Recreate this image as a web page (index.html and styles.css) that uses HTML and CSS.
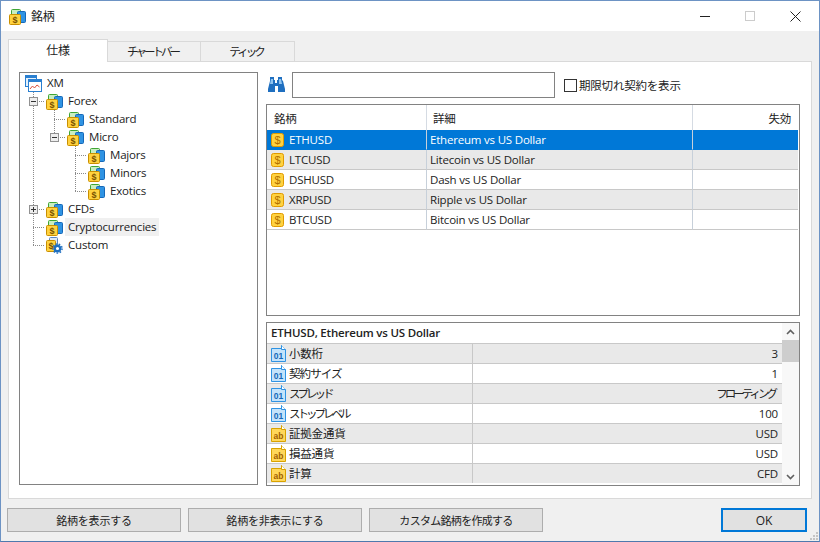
FILE: index.html
```html
<!DOCTYPE html>
<html lang="ja">
<head>
    <meta charset="UTF-8">
    <title>銘柄</title>
    <link rel="stylesheet" href="styles.css">
</head>
<body>
    <svg class="sprite">
        <symbol id="folder" viewBox="0 0 17 17">
            <rect x="2.500" y="1.500" width="9" height="7" rx="1" fill="#c8eec0" stroke="#3fa535"/>
            <rect x="8.500" y="3.500" width="8" height="11" rx="1" fill="#2f93e3" stroke="#1668b8"/>
            <rect x="0.500" y="6.500" width="11" height="10" rx="1" fill="#ffd23f" stroke="#c98f00"/>
        </symbol>
        <symbol id="custom" viewBox="0 0 17 17">
            <rect x="3.500" y="0.500" width="8" height="8" rx="1" fill="#dfe9f7" stroke="#5a86c0"/>
            <rect x="0.500" y="3.500" width="9" height="11" rx="1" fill="#ffd23f" stroke="#c98f00"/>
            <circle cx="11.500" cy="11.500" r="2.800" fill="#fff" stroke="#1f6fc0" stroke-width="2.400"/>
            <circle cx="11.500" cy="11.500" r="4.600" fill="none" stroke="#1f6fc0" stroke-width="1.400" stroke-dasharray="1.600 1.600"/>
        </symbol>
        <symbol id="xm" viewBox="0 0 17 17">
            <rect x="0.500" y="0.500" width="11" height="11" fill="#e4f1fc" stroke="#2a7fd0"/>
            <rect x="0" y="0" width="12" height="3" fill="#2a7fd0"/>
            <rect x="3.500" y="4.500" width="13" height="12" fill="#fff" stroke="#2a7fd0"/>
            <rect x="3" y="4" width="14" height="3" fill="#2a7fd0"/>
            <path d="M5 14l2.500-3 2 2 2.500-3 2.500 2" fill="none" stroke="#d8503c"/>
        </symbol>
        <symbol id="coin" viewBox="0 0 13 14">
            <rect x="0.500" y="0.500" width="12" height="13" rx="2" fill="#ffd23f" stroke="#e09a00"/>
        </symbol>
        <symbol id="num" viewBox="0 0 16 17">
            <path d="M0.500 3.500h10v-3l4 4v12h-14z" fill="#c4e3fa" stroke="#2f93e3"/>
            <path d="M10.500 0.500v4h4" fill="#fff" stroke="#2f93e3"/>
        </symbol>
        <symbol id="str" viewBox="0 0 16 17">
            <path d="M0.500 3.500h10v-3l4 4v12h-14z" fill="#ffd75a" stroke="#d9a200"/>
            <path d="M10.500 0.500v4h4" fill="#fff" stroke="#d9a200"/>
        </symbol>
        <symbol id="chev-up" viewBox="0 0 9 6">
            <path d="M1 5l3.500-3.500L8 5" fill="none" stroke="#606060" stroke-width="1.600"/>
        </symbol>
        <symbol id="chev-down" viewBox="0 0 9 6">
            <path d="M1 1l3.500 3.500L8 1" fill="none" stroke="#606060" stroke-width="1.600"/>
        </symbol>
    </svg>

    <div class="window">
        <div class="titlebar">
            <svg class="title-icon" viewBox="0 0 17 17"><use href="#folder"/><text x="6" y="15" class="dollar">$</text></svg>
            <span class="title-text">銘柄</span>
            <div class="controls">
                <span class="ctl-min"></span>
                <span class="ctl-max"></span>
                <svg class="ctl-close" viewBox="0 0 11 11"><path d="M0.500 0.500l10 10M10.500 0.500l-10 10" stroke="#222" fill="none"/></svg>
            </div>
        </div>

        <div class="tabs">
            <div class="tab active">仕様</div>
            <div class="tab tab-bar"><span class="kana">チャートバー</span></div>
            <div class="tab tab-tick"><span class="kana">ティック</span></div>
        </div>

        <div class="panel">
            <div class="tree">
                <div class="node"><svg class="node-icon"><use href="#xm"/></svg><span class="node-text">XM</span></div>
                <div class="node">
                    <span class="cell tee"><svg class="exp" viewBox="0 0 9 9"><rect x="0.500" y="0.500" width="8" height="8" fill="#eee" stroke="#919191"/><path d="M2 4.500h5" stroke="#333"/></svg></span>
                    <svg class="node-icon"><use href="#folder"/><text x="6" y="15" class="dollar">$</text></svg><span class="node-text">Forex</span>
                </div>
                <div class="node">
                    <span class="cell vert"></span><span class="cell tee"></span>
                    <svg class="node-icon"><use href="#folder"/><text x="6" y="15" class="dollar">$</text></svg><span class="node-text">Standard</span>
                </div>
                <div class="node">
                    <span class="cell vert"></span>
                    <span class="cell elbow"><svg class="exp" viewBox="0 0 9 9"><rect x="0.500" y="0.500" width="8" height="8" fill="#eee" stroke="#919191"/><path d="M2 4.500h5" stroke="#333"/></svg></span>
                    <svg class="node-icon"><use href="#folder"/><text x="6" y="15" class="dollar">$</text></svg><span class="node-text">Micro</span>
                </div>
                <div class="node">
                    <span class="cell vert"></span><span class="cell"></span><span class="cell tee"></span>
                    <svg class="node-icon"><use href="#folder"/><text x="6" y="15" class="dollar">$</text></svg><span class="node-text">Majors</span>
                </div>
                <div class="node">
                    <span class="cell vert"></span><span class="cell"></span><span class="cell tee"></span>
                    <svg class="node-icon"><use href="#folder"/><text x="6" y="15" class="dollar">$</text></svg><span class="node-text">Minors</span>
                </div>
                <div class="node">
                    <span class="cell vert"></span><span class="cell"></span><span class="cell elbow"></span>
                    <svg class="node-icon"><use href="#folder"/><text x="6" y="15" class="dollar">$</text></svg><span class="node-text">Exotics</span>
                </div>
                <div class="node">
                    <span class="cell tee"><svg class="exp" viewBox="0 0 9 9"><rect x="0.500" y="0.500" width="8" height="8" fill="#eee" stroke="#919191"/><path d="M2 4.500h5M4.500 2v5" stroke="#333"/></svg></span>
                    <svg class="node-icon"><use href="#folder"/><text x="6" y="15" class="dollar">$</text></svg><span class="node-text">CFDs</span>
                </div>
                <div class="node">
                    <span class="cell tee"></span>
                    <svg class="node-icon"><use href="#folder"/><text x="6" y="15" class="dollar">$</text></svg><span class="node-text hilite">Cryptocurrencies</span>
                </div>
                <div class="node">
                    <span class="cell elbow"></span>
                    <svg class="node-icon"><use href="#custom"/><text x="5" y="12" class="dollar">$</text></svg><span class="node-text">Custom</span>
                </div>
            </div>

            <div class="right">
                <div class="search">
                    <svg class="binoculars" viewBox="0 0 18 16">
                        <path d="M3 0h4v3h1v3h2V3h1V0h4v3l1 1 2 8v3h-7V9H8v6H1v-3l2-8z" fill="#1f6fc0"/>
                        <path d="M4 2h2v5H3zM12 2h2l1 5h-3z" fill="#8fc4f0"/>
                    </svg>
                    <input class="search-box" type="text">
                    <span class="check"></span>
                    <span class="check-label">期限切れ契約を表示</span>
                </div>

                <div class="list">
                    <table class="symbols">
                        <tr class="head"><th class="c1">銘柄</th><th class="c2">詳細</th><th class="c3">失効</th></tr>
                        <tr class="sel"><td><svg class="coin"><use href="#coin"/><text x="6.500" y="11" class="dollar dollar-big">$</text></svg>ETHUSD</td><td>Ethereum vs US Dollar</td><td></td></tr>
                        <tr class="alt"><td><svg class="coin"><use href="#coin"/><text x="6.500" y="11" class="dollar dollar-big">$</text></svg>LTCUSD</td><td>Litecoin vs US Dollar</td><td></td></tr>
                        <tr><td><svg class="coin"><use href="#coin"/><text x="6.500" y="11" class="dollar dollar-big">$</text></svg>DSHUSD</td><td>Dash vs US Dollar</td><td></td></tr>
                        <tr class="alt"><td><svg class="coin"><use href="#coin"/><text x="6.500" y="11" class="dollar dollar-big">$</text></svg>XRPUSD</td><td>Ripple vs US Dollar</td><td></td></tr>
                        <tr><td><svg class="coin"><use href="#coin"/><text x="6.500" y="11" class="dollar dollar-big">$</text></svg>BTCUSD</td><td>Bitcoin vs US Dollar</td><td></td></tr>
                    </table>
                </div>

                <div class="detail">
                    <div class="detail-main">
                        <div class="detail-title">ETHUSD, Ethereum vs US Dollar</div>
                        <table class="props">
                            <tr class="alt"><td class="p1"><svg class="prop-icon"><use href="#num"/><text x="7.500" y="13.500" class="code code-num">01</text></svg>小数桁</td><td class="p2">3</td></tr>
                            <tr><td class="p1"><svg class="prop-icon"><use href="#num"/><text x="7.500" y="13.500" class="code code-num">01</text></svg><span class="mixed">契約サイズ</span></td><td class="p2">1</td></tr>
                            <tr class="alt"><td class="p1"><svg class="prop-icon"><use href="#num"/><text x="7.500" y="13.500" class="code code-num">01</text></svg><span class="kana">スプレッド</span></td><td class="p2"><span class="kana">フローティング</span></td></tr>
                            <tr><td class="p1"><svg class="prop-icon"><use href="#num"/><text x="7.500" y="13.500" class="code code-num">01</text></svg><span class="kana">ストップレベル</span></td><td class="p2">100</td></tr>
                            <tr class="alt"><td class="p1"><svg class="prop-icon"><use href="#str"/><text x="7.500" y="13.500" class="code code-str">ab</text></svg>証拠金通貨</td><td class="p2">USD</td></tr>
                            <tr><td class="p1"><svg class="prop-icon"><use href="#str"/><text x="7.500" y="13.500" class="code code-str">ab</text></svg>損益通貨</td><td class="p2">USD</td></tr>
                            <tr class="alt"><td class="p1"><svg class="prop-icon"><use href="#str"/><text x="7.500" y="13.500" class="code code-str">ab</text></svg>計算</td><td class="p2">CFD</td></tr>
                        </table>
                    </div>
                    <div class="scrollbar">
                        <div class="arrow"><svg class="chev"><use href="#chev-up"/></svg></div>
                        <div class="thumb"></div>
                        <div class="track"></div>
                        <div class="arrow"><svg class="chev"><use href="#chev-down"/></svg></div>
                    </div>
                </div>
            </div>
        </div>

        <div class="footer">
            <button class="btn">銘柄を表示する</button>
            <button class="btn">銘柄を非表示にする</button>
            <button class="btn btn-long">カスタム銘柄を作成する</button>
            <button class="btn btn-ok">OK</button>
            <svg class="grip" viewBox="0 0 11 9">
                <path d="M8 0h2v2H8zM5 3h2v2H5zM8 3h2v2H8zM2 6h2v2H2zM5 6h2v2H5zM8 6h2v2H8z" fill="#c4c4c4"/>
            </svg>
        </div>
    </div>
</body>
</html>
```

FILE: styles.css
```css
* {
    box-sizing: border-box;
}
html, body {
    margin: 0;
    padding: 0;
}
body {
    width: 820px;
    height: 542px;
    overflow: hidden;
    font-family: "Open Sans", "Noto Sans CJK JP", sans-serif;
    font-size: 11.5px;
    letter-spacing: -0.2px;
    color: #222;
}
.sprite {
    display: block;
    width: 0;
    height: 0;
}
.kana {
    letter-spacing: -3px;
    margin-right: 3px;
}
.mixed {
    letter-spacing: -0.9px;
}
.dollar {
    font-family: "Liberation Sans", sans-serif;
    font-size: 9px;
    font-weight: bold;
    letter-spacing: 0;
    text-anchor: middle;
    fill: #7a5200;
}
.dollar-big {
    font-size: 11px;
    font-weight: normal;
    fill: #b06f00;
}
.code {
    font-family: "Liberation Sans", sans-serif;
    font-size: 8.500px;
    font-weight: bold;
    letter-spacing: 0;
    text-anchor: middle;
}
.code-num {
    fill: #1668b8;
}
.code-str {
    fill: #a06000;
}

.window {
    width: 820px;
    height: 542px;
    display: flex;
    flex-direction: column;
    background: #f0f0f0;
    border: 1px solid #6d93c4;
    border-bottom-color: #4f79ad;
}

.titlebar {
    height: 30px;
    flex: none;
    display: flex;
    align-items: center;
    background: #fff;
    padding-left: 8px;
}
.title-icon {
    width: 17px;
    height: 17px;
}
.title-text {
    margin-left: 5px;
    font-size: 12px;
}
.controls {
    margin-left: auto;
    display: flex;
    align-items: center;
    padding-right: 18px;
}
.ctl-min {
    width: 10px;
    height: 1px;
    background: #222;
}
.ctl-max {
    width: 10px;
    height: 10px;
    border: 1px solid #ccc;
    margin-left: 35px;
}
.ctl-close {
    width: 11px;
    height: 11px;
    margin-left: 35px;
}

.tabs {
    display: flex;
    align-items: flex-end;
    height: 23px;
    margin-top: 8px;
    padding-left: 7px;
    flex: none;
    position: relative;
    z-index: 1;
    margin-bottom: -1px;
}
.tab {
    height: 21px;
    width: 94px;
    background: #f0f0f0;
    border: 1px solid #d9d9d9;
    border-left: 0;
    text-align: center;
    line-height: 20px;
}
.tab-bar {
    width: 93px;
}
.active {
    width: 100px;
    height: 23px;
    background: #fff;
    border-left: 1px solid #d9d9d9;
    border-bottom: 0;
    font-size: 12px;
    line-height: 21px;
}

.panel {
    width: 804px;
    height: 438px;
    margin-left: 7px;
    flex: none;
    background: #fff;
    border: 1px solid #d9d9d9;
    padding: 10px;
    display: flex;
    gap: 8px;
}

.tree {
    width: 239px;
    height: 413px;
    flex: none;
    border: 1px solid #828282;
    padding: 1px 3px 0;
}
.node {
    display: flex;
    align-items: center;
    height: 18px;
}
.cell {
    width: 21px;
    height: 18px;
    flex: none;
    display: flex;
    align-items: center;
    justify-content: center;
    padding-right: 1px;
    background-repeat: no-repeat;
}
.vert {
    background-image: repeating-linear-gradient(to bottom, #8a8a8a 0 1px, transparent 1px 2px);
    background-size: 1px 18px;
    background-position: 10px 0;
}
.tee {
    background-image: repeating-linear-gradient(to bottom, #8a8a8a 0 1px, transparent 1px 2px),
        repeating-linear-gradient(to right, #8a8a8a 0 1px, transparent 1px 2px);
    background-size: 1px 18px, 11px 1px;
    background-position: 10px 0, 10px 9px;
}
.elbow {
    background-image: repeating-linear-gradient(to bottom, #8a8a8a 0 1px, transparent 1px 2px),
        repeating-linear-gradient(to right, #8a8a8a 0 1px, transparent 1px 2px);
    background-size: 1px 9px, 11px 1px;
    background-position: 10px 0, 10px 9px;
}
.exp {
    width: 9px;
    height: 9px;
}
.node-icon {
    width: 17px;
    height: 17px;
    margin-left: 2px;
    flex: none;
}
.node-text {
    margin-left: 2px;
    padding: 0 3px;
    line-height: 18px;
}
.hilite {
    background: #f0f0f0;
}

.right {
    width: 534px;
    flex: none;
    display: flex;
    flex-direction: column;
    gap: 6px;
}
.search {
    height: 26px;
    display: flex;
    align-items: center;
}
.binoculars {
    width: 18px;
    height: 16px;
    margin-left: 1px;
}
.search-box {
    width: 263px;
    height: 26px;
    margin: 0 0 0 7px;
    border: 1px solid #828282;
    background: #fff;
    outline: none;
}
.check {
    width: 13px;
    height: 13px;
    margin-left: 9px;
    border: 1px solid #333;
    background: #fff;
}
.check-label {
    margin-left: 2px;
}

.list {
    height: 212px;
    border: 1px solid #828282;
    padding-right: 1px;
}
table {
    border-collapse: separate;
    border-spacing: 0;
    table-layout: fixed;
    width: 100%;
}
.symbols th {
    height: 25px;
    font-weight: normal;
    text-align: left;
    padding: 0 0 0 7px;
    border-right: 1px solid #d5dbe3;
}
.symbols .c1 {
    width: 160px;
}
.symbols .c2 {
    width: 266px;
    padding-left: 6px;
}
.symbols .c3 {
    text-align: right;
    padding-right: 7px;
    border-right: 0;
}
.symbols td {
    height: 20px;
    padding: 0 0 1px 3px;
    border-bottom: 1px solid #c8c8c8;
    border-right: 1px solid #c7d0da;
    white-space: nowrap;
    vertical-align: middle;
}
.symbols td:last-child {
    border-right: 0;
}
.coin {
    width: 13px;
    height: 14px;
    margin: 0 5px 0 1px;
    vertical-align: -3px;
}
.alt td {
    background: #e9e9e9;
}
.sel td {
    background: #0078d7;
    color: #fff;
    border-bottom-color: #0078d7;
}

.detail {
    height: 164px;
    border: 1px solid #828282;
    display: flex;
}
.detail-main {
    flex: 1;
    min-width: 0;
    overflow: hidden;
}
.detail-title {
    height: 20px;
    line-height: 20px;
    font-weight: 600;
    padding-left: 4px;
}
.props td {
    height: 20px;
    padding: 0 0 1px;
    border-top: 1px solid #c8c8c8;
    white-space: nowrap;
    vertical-align: middle;
}
.props .p1 {
    width: 206px;
    padding-left: 4px;
    border-right: 1px solid #c8c8c8;
}
.props .p2 {
    text-align: right;
    padding-right: 4px;
}
.prop-icon {
    width: 16px;
    height: 17px;
    margin-right: 2px;
    vertical-align: -4px;
}
.scrollbar {
    width: 17px;
    flex: none;
    display: flex;
    flex-direction: column;
    background: #f8f8f8;
}
.arrow {
    height: 17px;
    flex: none;
    display: flex;
    align-items: center;
    justify-content: center;
}
.chev {
    width: 9px;
    height: 6px;
}
.thumb {
    height: 22px;
    background: #cdcdcd;
}
.track {
    flex: 1;
}

.footer {
    flex: 1;
    display: flex;
    gap: 7px;
    padding: 9px 0 0 6px;
    align-items: flex-start;
}
.btn {
    width: 174px;
    height: 24px;
    padding: 0;
    background: #e1e1e1;
    border: 1px solid #adadad;
    font-family: inherit;
    font-size: 11px;
    letter-spacing: -0.2px;
    color: #222;
}
.btn-long {
    letter-spacing: -0.7px;
}
.btn-ok {
    width: 86px;
    margin-left: auto;
    border: 2px solid #0078d7;
    font-size: 12px;
}
.grip {
    width: 11px;
    height: 9px;
    margin-left: -6px;
    align-self: flex-end;
}
```
